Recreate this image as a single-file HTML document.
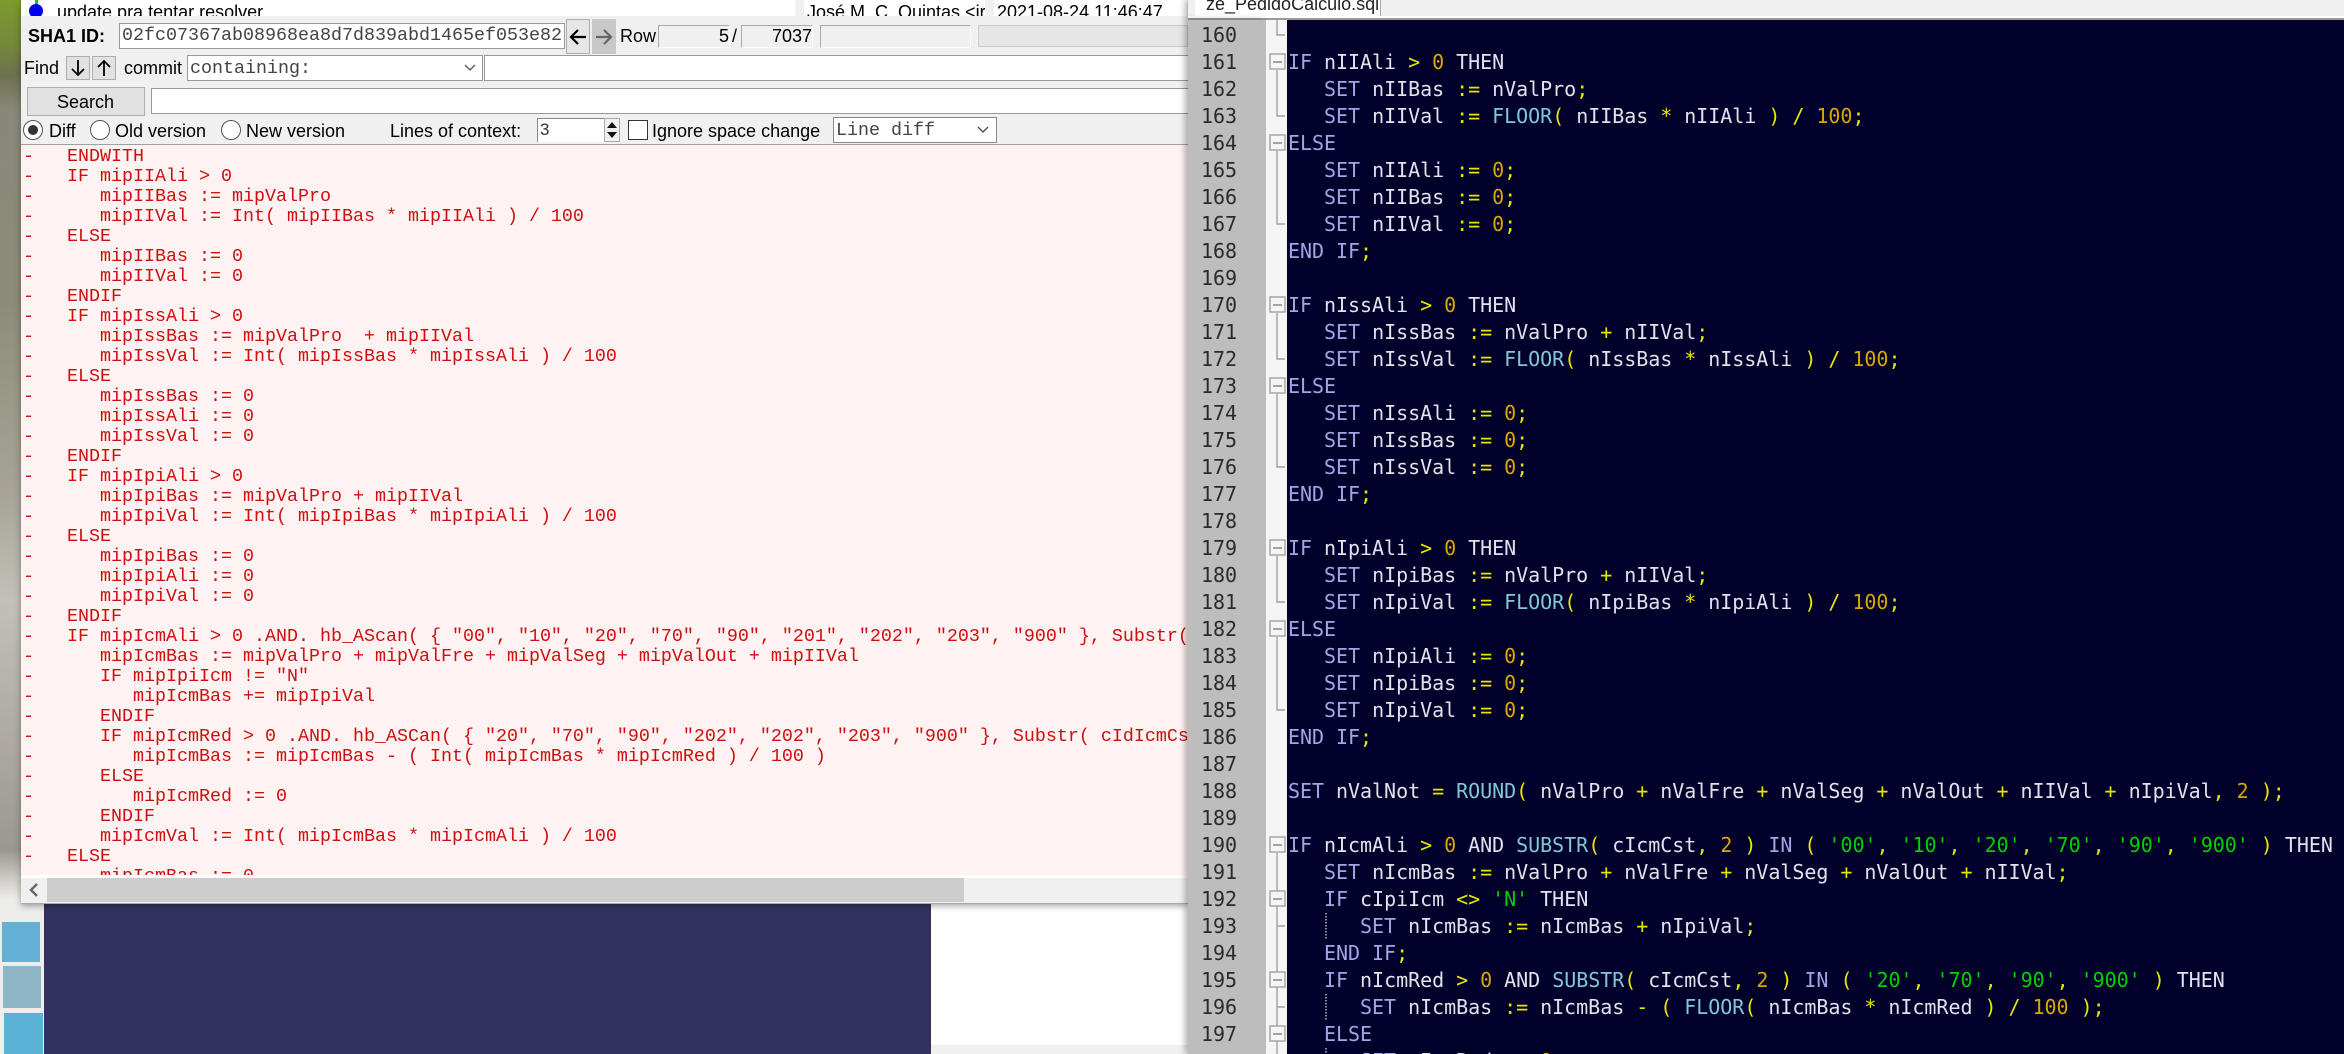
<!DOCTYPE html>
<html>
<head>
<meta charset="utf-8">
<style>
html,body{margin:0;padding:0;background:#fff;width:2344px;height:1054px;overflow:hidden;}
#page{width:2344px;height:1054px;overflow:hidden;position:relative;font-family:"Liberation Sans",sans-serif;font-size:18px;color:#000;}
.a{position:absolute;}
.t{position:absolute;white-space:pre;line-height:22px;}
.m{font-family:"Liberation Mono",monospace;font-size:18.33px;color:#444;}
.f{position:absolute;background:#fff;border:1px solid #999;box-sizing:border-box;}
.g{position:absolute;background:#e1e1e1;border:1px solid #adadad;box-sizing:border-box;}
.r{position:absolute;width:20px;height:20px;border-radius:50%;background:#fff;border:1px solid #555;box-sizing:border-box;}
#lc{position:absolute;margin:0;font-family:"Liberation Mono",monospace;font-size:18.33px;line-height:20px;color:#cc1010;white-space:pre;}
#nums{position:absolute;left:1201px;top:21.5px;margin:0;font-family:"DejaVu Sans Mono",monospace;font-size:20px;line-height:27px;color:#2a2a2a;white-space:pre;letter-spacing:-.035px;}
#rcw{position:absolute;left:1287px;top:20px;width:1057px;height:1034px;overflow:hidden;}
#rc{position:absolute;left:1px;top:1.5px;margin:0;font-family:"DejaVu Sans Mono",monospace;font-size:20px;line-height:27px;color:#e2e2ea;white-space:pre;letter-spacing:-.035px;}
#rc b{font-weight:normal;color:#a4a4e6;}
#rc i{font-style:normal;color:#e6e600;}
#rc u{text-decoration:none;color:#d8a800;}
#rc s{text-decoration:none;color:#00d000;}
#rc em{font-style:normal;color:#80c8d8;}
</style>
</head>
<body>
<div id="page">
<!-- wallpaper -->
<div class="a" style="left:0;top:0;width:44px;height:1054px;background:linear-gradient(180deg,#7d9a30 0,#75883a 45px,#6e7050 75px,#88887a 110px,#8d8b78 300px,#a8a598 500px,#c2c0b8 600px,#aca8a0 750px,#9a9890 850px,#d8d6d0 885px,#ececea 900px,#eeeeec 1054px);"></div>
<div class="a" style="left:2px;top:922px;width:38px;height:40px;background:#62b0d4;"></div>
<div class="a" style="left:3px;top:966px;width:38px;height:42px;background:#8fb6c6;"></div>
<div class="a" style="left:4px;top:1013px;width:39px;height:41px;background:#5cb2d6;"></div>

<!-- background navy + white -->
<div class="a" style="left:44px;top:903px;width:887px;height:151px;background:#33325f;"></div>
<div class="a" style="left:931px;top:903px;width:257px;height:142px;background:#fff;"></div>
<div class="a" style="left:931px;top:1045px;width:257px;height:9px;background:#f0f0f0;"></div>

<!-- left window -->
<div class="a" style="left:21px;top:0;width:1167px;height:904px;background:#f0f0f0;box-shadow:0 2px 6px rgba(0,0,0,.35);overflow:hidden;border-bottom:1px solid #aaa;box-sizing:border-box;">
</div>
<div class="a" style="left:21px;top:0;width:774px;height:16px;background:#fff;overflow:hidden;">
  <div class="a" style="left:14px;top:0;width:3px;height:5px;background:#0c0;"></div>
  <div class="a" style="left:8px;top:4px;width:14px;height:14px;border-radius:50%;background:#0000f0;"></div>
  <div class="t" style="left:36px;top:1px;">update pra tentar resolver</div>
</div>
<div class="a" style="left:804px;top:0;width:181px;height:16px;background:#fff;overflow:hidden;">
  <div class="t" style="left:3px;top:1px;">José M. C. Quintas &lt;ir</div>
</div>
<div class="a" style="left:994px;top:0;width:193px;height:16px;background:#fff;overflow:hidden;">
  <div class="t" style="left:3px;top:1px;">2021-08-24 11:46:47</div>
</div>

<div class="t" style="left:28px;top:25px;font-weight:bold;">SHA1 ID:</div>
<div class="f" style="left:119px;top:23px;width:446px;height:26px;"></div>
<div class="t m" style="left:122px;top:25px;">02fc07367ab08968ea8d7d839abd1465ef053e82</div>
<div class="g" style="left:566px;top:19px;width:24px;height:35px;background:#e6e6e6;"></div>
<svg class="a" style="left:568px;top:26px;" width="20" height="22" viewBox="0 0 20 22"><path d="M18 11H3M10 4L3 11L10 18" fill="none" stroke="#000" stroke-width="2.2"/></svg>
<div class="a" style="left:592px;top:19px;width:24px;height:35px;background:#c8c8c8;"></div>
<svg class="a" style="left:594px;top:26px;" width="20" height="22" viewBox="0 0 20 22"><path d="M2 11H17M10 4L17 11L10 18" fill="none" stroke="#666" stroke-width="2.2"/></svg>
<div class="t" style="left:620px;top:25px;">Row</div>
<div class="a" style="left:658px;top:25px;width:72px;height:23px;border:1px solid #aaa;border-right-color:#fff;border-bottom-color:#fff;box-sizing:border-box;"></div>
<div class="t" style="left:719px;top:25px;">5</div>
<div class="t" style="left:732px;top:25px;">/</div>
<div class="a" style="left:741px;top:25px;width:72px;height:23px;border:1px solid #aaa;border-right-color:#fff;border-bottom-color:#fff;box-sizing:border-box;"></div>
<div class="t" style="left:772px;top:25px;">7037</div>
<div class="a" style="left:820px;top:25px;width:151px;height:23px;border:1px solid #aaa;border-right-color:#fff;border-bottom-color:#fff;box-sizing:border-box;"></div>
<div class="a" style="left:978px;top:25px;width:210px;height:22px;background:#e6e6e6;border:1px solid #ccc;box-sizing:border-box;"></div>

<div class="t" style="left:24px;top:57px;">Find</div>
<div class="g" style="left:66px;top:56px;width:24px;height:24px;"></div>
<svg class="a" style="left:68px;top:58px;" width="20" height="20" viewBox="0 0 20 20"><path d="M10 2V17M4 11L10 17L16 11" fill="none" stroke="#000" stroke-width="1.8"/></svg>
<div class="g" style="left:92px;top:56px;width:24px;height:24px;"></div>
<svg class="a" style="left:94px;top:58px;" width="20" height="20" viewBox="0 0 20 20"><path d="M10 18V3M4 9L10 3L16 9" fill="none" stroke="#000" stroke-width="1.8"/></svg>
<div class="t" style="left:124px;top:57px;">commit</div>
<div class="f" style="left:187px;top:55px;width:296px;height:26px;"></div>
<div class="t m" style="left:190px;top:58px;">containing:</div>
<svg class="a" style="left:463px;top:63px;" width="14" height="10" viewBox="0 0 14 10"><path d="M2 2L7 7L12 2" fill="none" stroke="#555" stroke-width="1.3"/></svg>
<div class="f" style="left:484px;top:55px;width:704px;height:26px;border-right:0;"></div>

<div class="g" style="left:27px;top:87px;width:118px;height:29px;"></div>
<div class="t" style="left:57px;top:91px;">Search</div>
<div class="f" style="left:151px;top:88px;width:1037px;height:26px;border-right:0;"></div>

<div class="r" style="left:23px;top:120px;"></div>
<div class="a" style="left:28px;top:125px;width:10px;height:10px;border-radius:50%;background:#333;"></div>
<div class="t" style="left:49px;top:120px;">Diff</div>
<div class="r" style="left:90px;top:120px;"></div>
<div class="t" style="left:115px;top:120px;">Old version</div>
<div class="r" style="left:221px;top:120px;"></div>
<div class="t" style="left:246px;top:120px;">New version</div>
<div class="t" style="left:390px;top:120px;">Lines of context:</div>
<div class="a" style="left:537px;top:118px;width:67px;height:24px;background:#fff;border-left:1px solid #888;border-top:1px solid #888;box-sizing:border-box;"></div>
<div class="t" style="left:540px;top:119px;font-size:17px;color:#333;">3</div>
<div class="a" style="left:604px;top:118px;width:16px;height:24px;background:#f0f0f0;border:1px solid #aaa;box-sizing:border-box;"></div>
<svg class="a" style="left:605px;top:120px;" width="14" height="20" viewBox="0 0 14 20"><path d="M7 2L12 8H2ZM2 12H12L7 18Z" fill="#111"/></svg>
<div class="a" style="left:628px;top:120px;width:20px;height:20px;background:#fff;border:1px solid #333;box-sizing:border-box;"></div>
<div class="t" style="left:652px;top:120px;">Ignore space change</div>
<div class="f" style="left:833px;top:117px;width:164px;height:26px;border-color:#888;"></div>
<div class="t m" style="left:836px;top:120px;">Line diff</div>
<svg class="a" style="left:976px;top:125px;" width="14" height="10" viewBox="0 0 14 10"><path d="M2 2L7 7L12 2" fill="none" stroke="#444" stroke-width="1.3"/></svg>

<!-- diff pane -->
<div class="a" style="left:21px;top:144px;width:1167px;height:731px;background:#fff2f2;border-top:1px solid #a0a0a0;box-sizing:border-box;"></div>
<div class="a" style="left:21px;top:144px;width:1167px;height:731px;overflow:hidden;">
<pre id="lc" style="left:2px;top:3px;">-   ENDWITH
-   IF mipIIAli &gt; 0
-      mipIIBas := mipValPro
-      mipIIVal := Int( mipIIBas * mipIIAli ) / 100
-   ELSE
-      mipIIBas := 0
-      mipIIVal := 0
-   ENDIF
-   IF mipIssAli &gt; 0
-      mipIssBas := mipValPro  + mipIIVal
-      mipIssVal := Int( mipIssBas * mipIssAli ) / 100
-   ELSE
-      mipIssBas := 0
-      mipIssAli := 0
-      mipIssVal := 0
-   ENDIF
-   IF mipIpiAli &gt; 0
-      mipIpiBas := mipValPro + mipIIVal
-      mipIpiVal := Int( mipIpiBas * mipIpiAli ) / 100
-   ELSE
-      mipIpiBas := 0
-      mipIpiAli := 0
-      mipIpiVal := 0
-   ENDIF
-   IF mipIcmAli &gt; 0 .AND. hb_AScan( { "00", "10", "20", "70", "90", "201", "202", "203", "900" }, Substr( cIdIcmCst, 2 ) ) &gt; 0
-      mipIcmBas := mipValPro + mipValFre + mipValSeg + mipValOut + mipIIVal
-      IF mipIpiIcm != "N"
-         mipIcmBas += mipIpiVal
-      ENDIF
-      IF mipIcmRed &gt; 0 .AND. hb_ASCan( { "20", "70", "90", "202", "202", "203", "900" }, Substr( cIdIcmCst, 2 ) ) &gt; 0
-         mipIcmBas := mipIcmBas - ( Int( mipIcmBas * mipIcmRed ) / 100 )
-      ELSE
-         mipIcmRed := 0
-      ENDIF
-      mipIcmVal := Int( mipIcmBas * mipIcmAli ) / 100
-   ELSE
-      mipIcmBas := 0</pre>
</div>
<div class="a" style="left:21px;top:875px;width:1167px;height:3px;background:#fff;"></div>
<div class="a" style="left:21px;top:878px;width:1167px;height:24px;background:#f0f0f0;"></div>
<div class="a" style="left:47px;top:878px;width:917px;height:24px;background:#cdcdcd;"></div>
<svg class="a" style="left:27px;top:882px;" width="14" height="16" viewBox="0 0 14 16"><path d="M10 2L4 8L10 14" fill="none" stroke="#666" stroke-width="2.4"/></svg>

<!-- right window -->
<div class="a" style="left:1188px;top:0;width:1156px;height:20px;background:#f0f0f0;box-shadow:-3px 0 6px rgba(0,0,0,.3);overflow:hidden;">
  <div class="a" style="left:0;top:16px;width:1156px;height:2px;background:#fff;"></div>
  <div class="a" style="left:0;top:18px;width:1156px;height:2px;background:#9a9aa0;"></div>
  <div class="a" style="left:7px;top:0;width:186px;height:16px;background:#fff;border-right:1px solid #aaa;box-sizing:border-box;"></div>
  <div class="t" style="left:18px;top:-7px;color:#222;">ze_PedidoCalculo.sql</div>
</div>
<div class="a" style="left:1188px;top:20px;width:78px;height:1034px;background:#bdbdbd;box-shadow:-3px 0 6px rgba(0,0,0,.3);"></div>
<div class="a" style="left:1266px;top:20px;width:21px;height:1034px;background:#f5f5f5;"></div>
<div class="a" style="left:1287px;top:20px;width:1057px;height:1034px;background:#00002b;overflow:hidden;"></div>

<svg class="a" style="left:1266px;top:20px;" width="21" height="1034" viewBox="0 20 21 1034">
<g fill="none" stroke="#a0a0a0" stroke-width="1.4">
<path d="M11 20V35H19"/>
<path d="M11 70V116H19"/>
<path d="M11 151V224H19"/>
<path d="M11 313V359H19"/>
<path d="M11 394V467H19"/>
<path d="M11 556V602H19"/>
<path d="M11 637V710H19"/>
<path d="M11 853V1054"/>
<path d="M11 926H19M11 1007H19"/>
</g>
<g fill="#f5f5f5" stroke="#a0a0a0" stroke-width="1.4">
<rect x="4" y="54" width="15" height="15"/><rect x="4" y="135" width="15" height="15"/>
<rect x="4" y="297" width="15" height="15"/><rect x="4" y="378" width="15" height="15"/>
<rect x="4" y="540" width="15" height="15"/><rect x="4" y="621" width="15" height="15"/>
<rect x="4" y="837" width="15" height="15"/><rect x="4" y="891" width="15" height="15"/>
<rect x="4" y="972" width="15" height="15"/><rect x="4" y="1026" width="15" height="15"/>
</g>
<g stroke="#888" stroke-width="1.4">
<path d="M7 62H16M7 143H16M7 305H16M7 386H16M7 548H16M7 629H16M7 845H16M7 899H16M7 980H16M7 1034H16"/>
</g>
</svg>

<pre id="nums">160
161
162
163
164
165
166
167
168
169
170
171
172
173
174
175
176
177
178
179
180
181
182
183
184
185
186
187
188
189
190
191
192
193
194
195
196
197</pre>

<div id="rcw">
<pre id="rc">

<b>IF</b> nIIAli <i>&gt;</i> <u>0</u> THEN
   <b>SET</b> nIIBas <i>:=</i> nValPro<i>;</i>
   <b>SET</b> nIIVal <i>:=</i> <em>FLOOR</em><i>(</i> nIIBas <i>*</i> nIIAli <i>)</i> <i>/</i> <u>100</u><i>;</i>
<b>ELSE</b>
   <b>SET</b> nIIAli <i>:=</i> <u>0</u><i>;</i>
   <b>SET</b> nIIBas <i>:=</i> <u>0</u><i>;</i>
   <b>SET</b> nIIVal <i>:=</i> <u>0</u><i>;</i>
<b>END IF</b><i>;</i>

<b>IF</b> nIssAli <i>&gt;</i> <u>0</u> THEN
   <b>SET</b> nIssBas <i>:=</i> nValPro <i>+</i> nIIVal<i>;</i>
   <b>SET</b> nIssVal <i>:=</i> <em>FLOOR</em><i>(</i> nIssBas <i>*</i> nIssAli <i>)</i> <i>/</i> <u>100</u><i>;</i>
<b>ELSE</b>
   <b>SET</b> nIssAli <i>:=</i> <u>0</u><i>;</i>
   <b>SET</b> nIssBas <i>:=</i> <u>0</u><i>;</i>
   <b>SET</b> nIssVal <i>:=</i> <u>0</u><i>;</i>
<b>END IF</b><i>;</i>

<b>IF</b> nIpiAli <i>&gt;</i> <u>0</u> THEN
   <b>SET</b> nIpiBas <i>:=</i> nValPro <i>+</i> nIIVal<i>;</i>
   <b>SET</b> nIpiVal <i>:=</i> <em>FLOOR</em><i>(</i> nIpiBas <i>*</i> nIpiAli <i>)</i> <i>/</i> <u>100</u><i>;</i>
<b>ELSE</b>
   <b>SET</b> nIpiAli <i>:=</i> <u>0</u><i>;</i>
   <b>SET</b> nIpiBas <i>:=</i> <u>0</u><i>;</i>
   <b>SET</b> nIpiVal <i>:=</i> <u>0</u><i>;</i>
<b>END IF</b><i>;</i>

<b>SET</b> nValNot <i>=</i> <em>ROUND</em><i>(</i> nValPro <i>+</i> nValFre <i>+</i> nValSeg <i>+</i> nValOut <i>+</i> nIIVal <i>+</i> nIpiVal<i>,</i> <u>2</u> <i>);</i>

<b>IF</b> nIcmAli <i>&gt;</i> <u>0</u> AND <em>SUBSTR</em><i>(</i> cIcmCst<i>,</i> <u>2</u> <i>)</i> <b>IN</b> <i>(</i> <s>'00'</s><i>,</i> <s>'10'</s><i>,</i> <s>'20'</s><i>,</i> <s>'70'</s><i>,</i> <s>'90'</s><i>,</i> <s>'900'</s> <i>)</i> THEN
   <b>SET</b> nIcmBas <i>:=</i> nValPro <i>+</i> nValFre <i>+</i> nValSeg <i>+</i> nValOut <i>+</i> nIIVal<i>;</i>
   <b>IF</b> cIpiIcm <i>&lt;&gt;</i> <s>'N'</s> THEN
      <b>SET</b> nIcmBas <i>:=</i> nIcmBas <i>+</i> nIpiVal<i>;</i>
   <b>END IF</b><i>;</i>
   <b>IF</b> nIcmRed <i>&gt;</i> <u>0</u> AND <em>SUBSTR</em><i>(</i> cIcmCst<i>,</i> <u>2</u> <i>)</i> <b>IN</b> <i>(</i> <s>'20'</s><i>,</i> <s>'70'</s><i>,</i> <s>'90'</s><i>,</i> <s>'900'</s> <i>)</i> THEN
      <b>SET</b> nIcmBas <i>:=</i> nIcmBas <i>-</i> <i>(</i> <em>FLOOR</em><i>(</i> nIcmBas <i>*</i> nIcmRed <i>)</i> <i>/</i> <u>100</u> <i>);</i>
   <b>ELSE</b>
      <b>SET</b> nIcmRed <i>:=</i> <u>0</u><i>;</i></pre>
</div>

<svg class="a" style="left:1324px;top:900px;" width="4" height="154" viewBox="0 0 4 154">
<g stroke="#c8c8c8" stroke-width="1.4" stroke-dasharray="1.5 1.5" fill="none">
<path d="M2 13V40M2 94V121M2 148V154"/>
</g>
</svg>
</div>
</body>
</html>
